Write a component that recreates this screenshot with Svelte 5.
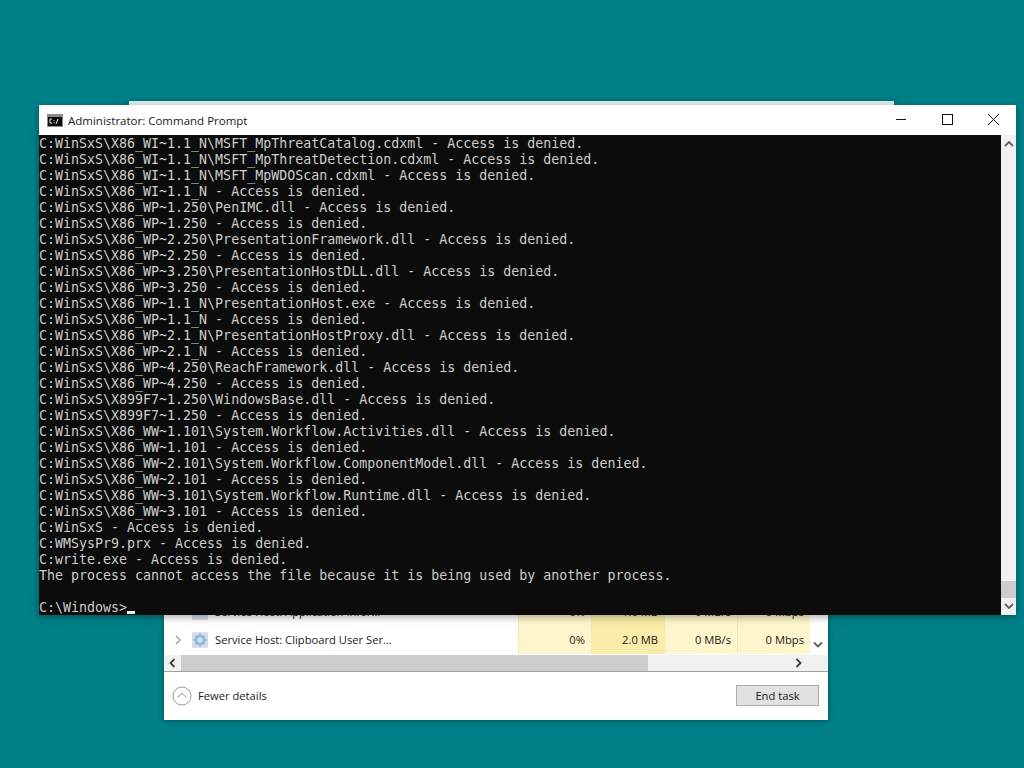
<script lang="ts">
  const lines: string[] = [
    'C:WinSxS\\X86_WI~1.1_N\\MSFT_MpThreatCatalog.cdxml - Access is denied.',
    'C:WinSxS\\X86_WI~1.1_N\\MSFT_MpThreatDetection.cdxml - Access is denied.',
    'C:WinSxS\\X86_WI~1.1_N\\MSFT_MpWDOScan.cdxml - Access is denied.',
    'C:WinSxS\\X86_WI~1.1_N - Access is denied.',
    'C:WinSxS\\X86_WP~1.250\\PenIMC.dll - Access is denied.',
    'C:WinSxS\\X86_WP~1.250 - Access is denied.',
    'C:WinSxS\\X86_WP~2.250\\PresentationFramework.dll - Access is denied.',
    'C:WinSxS\\X86_WP~2.250 - Access is denied.',
    'C:WinSxS\\X86_WP~3.250\\PresentationHostDLL.dll - Access is denied.',
    'C:WinSxS\\X86_WP~3.250 - Access is denied.',
    'C:WinSxS\\X86_WP~1.1_N\\PresentationHost.exe - Access is denied.',
    'C:WinSxS\\X86_WP~1.1_N - Access is denied.',
    'C:WinSxS\\X86_WP~2.1_N\\PresentationHostProxy.dll - Access is denied.',
    'C:WinSxS\\X86_WP~2.1_N - Access is denied.',
    'C:WinSxS\\X86_WP~4.250\\ReachFramework.dll - Access is denied.',
    'C:WinSxS\\X86_WP~4.250 - Access is denied.',
    'C:WinSxS\\X899F7~1.250\\WindowsBase.dll - Access is denied.',
    'C:WinSxS\\X899F7~1.250 - Access is denied.',
    'C:WinSxS\\X86_WW~1.101\\System.Workflow.Activities.dll - Access is denied.',
    'C:WinSxS\\X86_WW~1.101 - Access is denied.',
    'C:WinSxS\\X86_WW~2.101\\System.Workflow.ComponentModel.dll - Access is denied.',
    'C:WinSxS\\X86_WW~2.101 - Access is denied.',
    'C:WinSxS\\X86_WW~3.101\\System.Workflow.Runtime.dll - Access is denied.',
    'C:WinSxS\\X86_WW~3.101 - Access is denied.',
    'C:WinSxS - Access is denied.',
    'C:WMSysPr9.prx - Access is denied.',
    'C:write.exe - Access is denied.',
    'The process cannot access the file because it is being used by another process.',
    ''
  ];
</script>

<div class="desktop">
  <div class="back-window"></div>

  <div class="taskmgr">
    <div class="rows">
      <div class="row">
        <span class="expand"></span>
        <span class="svc-icon"></span>
        <span class="name">Service Host: Application Infor...</span>
        <span class="cell">0%</span>
        <span class="cell mem">1.0 MB</span>
        <span class="cell">0 MB/s</span>
        <span class="cell">0 Mbps</span>
      </div>
      <div class="row">
        <svg class="expand" viewBox="0 0 8 10" width="8" height="10"><path d="M2 1l4 4-4 4" fill="none" stroke="#a6a6a6" stroke-width="1.6"/></svg>
        <svg class="svc-icon" viewBox="0 0 16 16" width="16" height="16">
          <rect width="16" height="16" fill="#d5dde8"/>
          <circle cx="8" cy="8" r="4" fill="none" stroke="#8fb4dc" stroke-width="2.6"/>
          <path d="M8 1.500v2M8 12.500v2M1.500 8h2M12.500 8h2M3.400 3.400l1.400 1.400M11.200 11.200l1.400 1.400M3.400 12.600l1.400-1.400M11.200 4.800l1.400-1.400" stroke="#8fb4dc" stroke-width="1.800"/>
        </svg>
        <span class="name">Service Host: Clipboard User Ser...</span>
        <span class="cell">0%</span>
        <span class="cell mem">2.0 MB</span>
        <span class="cell">0 MB/s</span>
        <span class="cell">0 Mbps</span>
      </div>
      <svg class="row-down" viewBox="0 0 10 8" width="10" height="8"><path d="M1 1.500l4 4 4-4" fill="none" stroke="#606060" stroke-width="1.800"/></svg>
    </div>
    <div class="hscroll">
      <svg class="harrow" viewBox="0 0 8 10" width="8" height="10"><path d="M6 1L2 5l4 4" fill="none" stroke="#404040" stroke-width="1.800"/></svg>
      <div class="hthumb"></div>
      <svg class="harrow right" viewBox="0 0 8 10" width="8" height="10"><path d="M2 1l4 4-4 4" fill="none" stroke="#404040" stroke-width="1.800"/></svg>
    </div>
    <div class="footer">
      <svg viewBox="0 0 20 20" width="20" height="20">
        <circle cx="10" cy="10" r="9" fill="#fff" stroke="#9a9a9a"/>
        <path d="M5.500 11.500L10 7l4.500 4.500" fill="none" stroke="#b8b8b8" stroke-width="1.200"/>
      </svg>
      <span class="fewer">Fewer details</span>
      <span class="end-task">End task</span>
    </div>
  </div>

  <div class="cmd">
    <div class="titlebar">
      <svg class="cmd-icon" viewBox="0 0 16 13" width="16" height="13">
        <rect width="16" height="13" fill="#8a8a8a"/>
        <rect x="1" y="3" width="14" height="9" fill="#0a0a0a"/>
        <path d="M5 5H3v4h2M7 6v.8M7 8v.8M11 5L9 10" fill="none" stroke="#e8e8e8" stroke-width="1"/>
      </svg>
      <span class="title">Administrator: Command Prompt</span>
      <div class="controls">
        <svg viewBox="0 0 46 30" width="46" height="30"><path d="M18 19.500h10" stroke="#111" stroke-width="1"/></svg>
        <svg viewBox="0 0 46 30" width="46" height="30"><rect x="18.500" y="14.500" width="10" height="10" fill="none" stroke="#111"/></svg>
        <svg viewBox="0 0 46 30" width="46" height="30"><path d="M18 14l11 11M29 14L18 25" stroke="#111" stroke-width="1"/></svg>
      </div>
    </div>
    <div class="body">
      <div class="console">
        {#each lines as line}
          <div class="line">{line}</div>
        {/each}
        <div class="line">C:\Windows&gt;<span class="cursor"></span></div>
      </div>
      <div class="vscroll">
        <svg viewBox="0 0 10 8" width="10" height="8"><path d="M1 6l4-4 4 4" fill="none" stroke="#606060" stroke-width="1.800"/></svg>
        <div class="track"><div class="vthumb"></div></div>
        <svg viewBox="0 0 10 8" width="10" height="8"><path d="M1 2l4 4 4-4" fill="none" stroke="#606060" stroke-width="1.800"/></svg>
      </div>
    </div>
  </div>
</div>

<style>
  :global(body) {
    margin: 0;
  }

  .desktop {
    position: relative;
    width: 1024px;
    height: 768px;
    overflow: hidden;
    background: #018088;
  }

  .back-window {
    position: absolute;
    left: 129px;
    top: 101px;
    width: 765px;
    height: 20px;
    background: #e9f2f3;
    border-top: 2px solid #d8eef0;
    box-sizing: border-box;
    box-shadow: 0 1px 6px rgba(0, 0, 0, 0.3);
  }

  .taskmgr {
    position: absolute;
    left: 164px;
    top: 598px;
    width: 664px;
    height: 122px;
    background: #fff;
    box-shadow: 0 1px 6px rgba(0, 0, 0, 0.35);
    font-family: "Open Sans", sans-serif;
    font-size: 11.2px;
    color: #1a1a1a;
  }

  .rows {
    position: relative;
    height: 57px;
  }

  .row {
    display: flex;
    align-items: center;
    height: 28px;
    padding-left: 10px;
    padding-right: 18px;
  }

  .expand {
    width: 8px;
    margin-right: 10px;
  }

  .svc-icon {
    width: 16px;
    height: 16px;
    margin-right: 7px;
    background: #d5dde8;
  }

  .name {
    flex: 1;
    white-space: nowrap;
    padding-bottom: 2px;
  }

  .cell {
    width: 73px;
    height: 100%;
    box-sizing: border-box;
    padding-right: 6px;
    padding-bottom: 2px;
    display: flex;
    align-items: center;
    justify-content: flex-end;
    background: #fdf6cc;
    border-left: 1px solid #f1e9bc;
  }

  .cell.mem {
    background: #f9eca8;
  }

  .row-down {
    position: absolute;
    right: 5px;
    bottom: 6px;
  }

  .hscroll {
    display: flex;
    align-items: center;
    height: 16px;
    background: #f0f0f0;
    border-bottom: 1px solid #a0a0a0;
  }

  .harrow {
    width: 17px;
    flex: none;
  }

  .hthumb {
    width: 467px;
    height: 16px;
    background: #cdcdcd;
  }

  .harrow.right {
    margin-left: auto;
    margin-right: 21px;
  }

  .footer {
    display: flex;
    align-items: center;
    height: 47px;
    padding-left: 8px;
    padding-right: 9px;
  }

  .fewer {
    margin-left: 6px;
  }

  .end-task {
    margin-left: auto;
    width: 83px;
    height: 21px;
    display: flex;
    align-items: center;
    justify-content: center;
    background: #e1e1e1;
    border: 1px solid #adadad;
    box-sizing: border-box;
  }

  .cmd {
    position: absolute;
    left: 39px;
    top: 105px;
    width: 977px;
    height: 510px;
    display: flex;
    flex-direction: column;
    background: #fff;
    box-shadow: 0 2px 8px rgba(0, 0, 0, 0.35);
  }

  .titlebar {
    display: flex;
    align-items: center;
    height: 30px;
    flex: none;
  }

  .cmd-icon {
    margin-left: 8px;
    margin-right: 5px;
  }

  .title {
    font-family: "Open Sans", sans-serif;
    font-size: 11.5px;
    color: #1a1a1a;
  }

  .controls {
    display: flex;
    margin-left: auto;
    margin-top: -10px;
  }

  .controls svg {
    display: block;
  }

  .body {
    flex: 1;
    display: flex;
    min-height: 0;
  }

  .console {
    flex: 1;
    overflow: hidden;
    background: #0c0c0c;
    color: #cccccc;
    font-family: "DejaVu Sans Mono", "Liberation Mono", monospace;
    font-size: 13.3px;
    line-height: 16px;
  }

  .line {
    height: 16px;
    padding-top: 1px;
    box-sizing: border-box;
    white-space: pre;
    position: relative;
  }

  .cursor {
    position: absolute;
    left: 88px;
    top: 12px;
    width: 8px;
    height: 3px;
    background: #f2f2f2;
  }

  .vscroll {
    width: 15px;
    flex: none;
    display: flex;
    flex-direction: column;
    align-items: center;
    background: #f0f0f0;
  }

  .vscroll svg {
    margin: 5px 0;
    flex: none;
  }

  .track {
    flex: 1;
    width: 100%;
    display: flex;
    flex-direction: column;
    justify-content: flex-end;
  }

  .vthumb {
    height: 17px;
    margin-bottom: -1px;
    background: #cdcdcd;
  }
</style>
